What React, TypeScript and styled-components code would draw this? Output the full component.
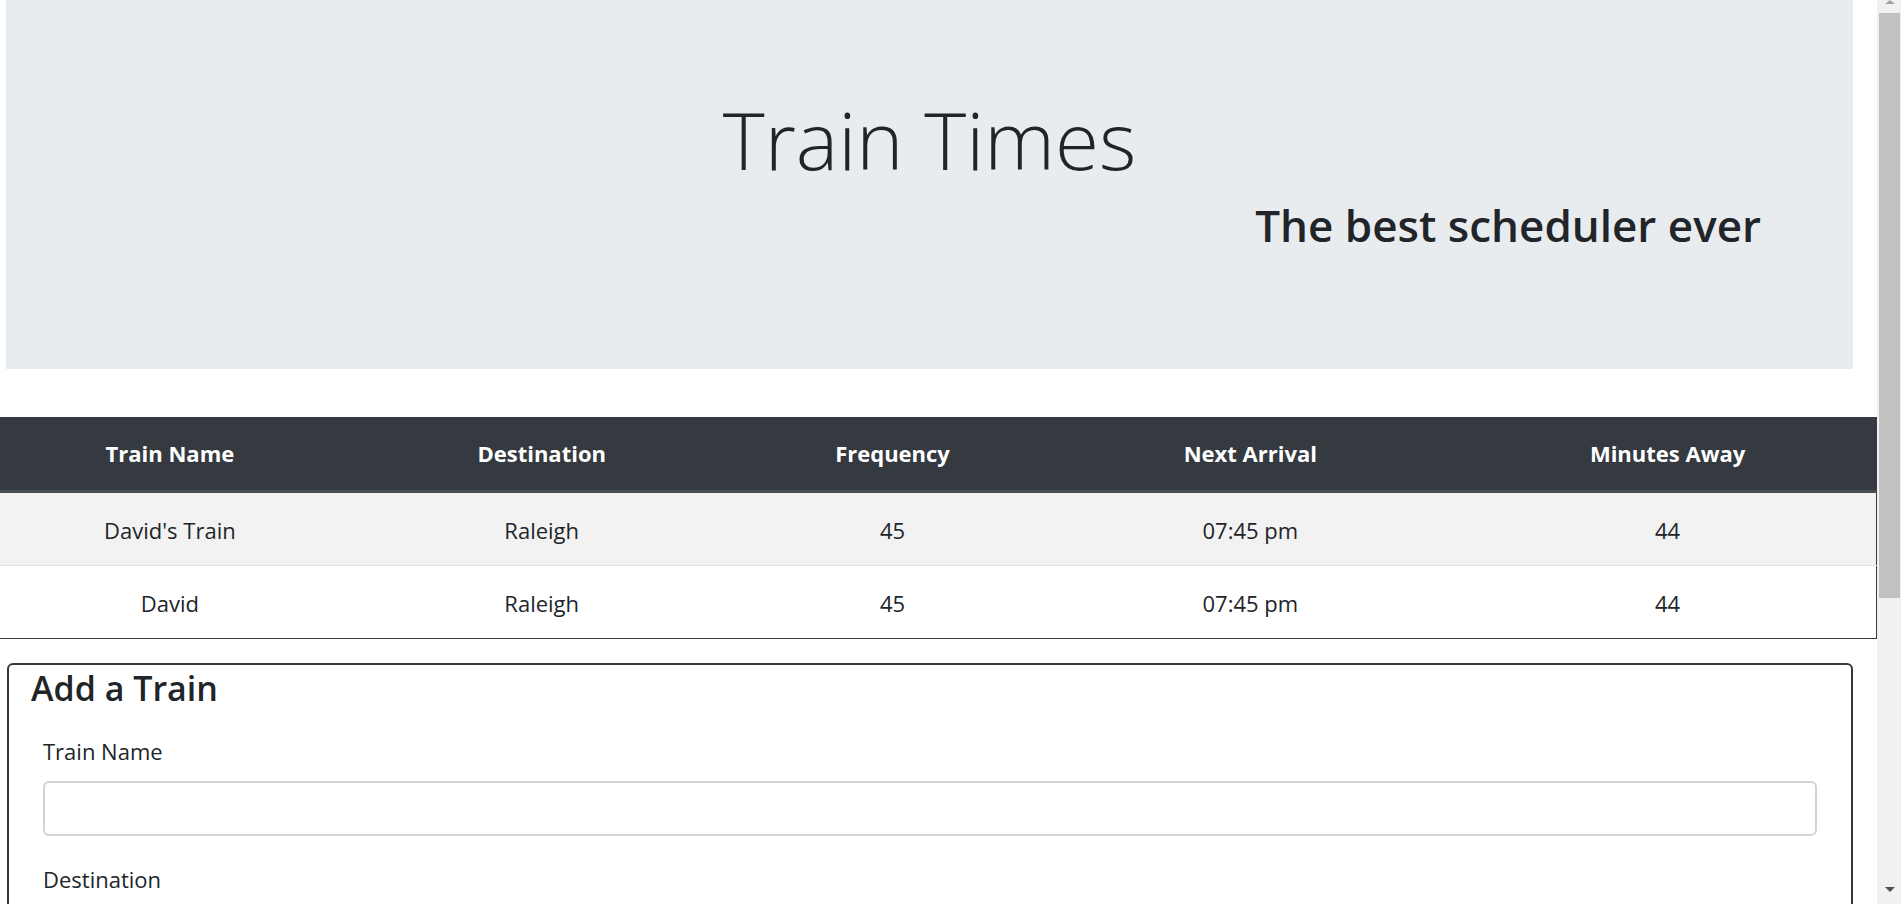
import styled, { createGlobalStyle } from 'styled-components'

const GlobalStyle = createGlobalStyle`
  html, body {
    margin: 0;
    padding: 0;
    height: 100%;
    overflow: hidden;
  }
  body {
    font-family: "Open Sans", "Noto Sans", sans-serif;
    color: #212529;
    background: #fff;
  }
  #root {
    height: 100%;
  }
`

const Shell = styled.div`
  display: flex;
  height: 100vh;
`

const Viewport = styled.main`
  flex: 1;
  min-width: 0;
  overflow: hidden;
`

// window scrollbar on the right edge, page scrolled to the top
const ScrollBar = styled.div`
  width: 24px;
  flex: none;
  display: flex;
  flex-direction: column;
  background: #f1f1f1;
`

const ScrollArrow = styled.div<{ $down?: boolean }>`
  height: ${p => (p.$down ? '17px' : '13px')};
  display: flex;
  justify-content: center;
  padding-left: 1px;

  &::before {
    content: '';
    width: 0;
    height: 0;
    border-left: 5px solid transparent;
    border-right: 5px solid transparent;
    ${p =>
      p.$down
        ? 'border-top: 5px solid #505050;'
        : 'border-bottom: 4px solid #a3a3a3;'}
  }
`

const ScrollThumb = styled.div`
  height: 585px;
  margin: 0 1px 0 2px;
  background: #c1c1c1;
`

const ScrollSpace = styled.div`
  flex: 1;
`

const Jumbotron = styled.header`
  box-sizing: border-box;
  height: 369px;
  margin: 0 24px 0 6px;
  padding: 99px 92px 0;
  background: #e9ecef;
  display: flex;
  flex-direction: column;
`

const Title = styled.h1`
  margin: 0;
  font-size: 80px;
  font-weight: 300;
  line-height: 1;
  text-align: center;
`

const Tagline = styled.h2`
  margin: 24px 0 0;
  font-size: 44px;
  font-weight: 600;
  line-height: 1;
  text-align: right;
`

const Schedule = styled.table`
  width: 100%;
  margin-top: 48px;
  border-collapse: collapse;
  border-right: 1px solid #343a40;
  font-size: 22px;
`

const HeadCell = styled.th<{ $w: number }>`
  width: ${p => p.$w}px;
  padding: 0;
  line-height: 73px;
  background: #343a40;
  color: #fff;
  font-weight: 700;
  text-align: center;
  border-bottom: 3px solid #454d55;
`

const Row = styled.tr<{ $striped?: boolean }>`
  background: ${p => (p.$striped ? '#f2f2f2' : '#fff')};

  &:last-child td {
    border-bottom-color: #343a40;
  }
`

const Cell = styled.td`
  padding: 2px 0 0;
  line-height: 70px;
  text-align: center;
  border-bottom: 1px solid #dee2e6;
`

const Card = styled.section`
  margin: 24px 24px 24px 7px;
  padding: 6px 22px 22px;
  border: 2px solid #343a40;
  border-radius: 6px;
`

const CardTitle = styled.h4`
  margin: 0;
  font-size: 34px;
  font-weight: 600;
  line-height: 1;
`

const Form = styled.form`
  margin-top: 35px;
  padding: 0 12px;
`

const FormGroup = styled.div`
  margin-bottom: 32px;
`

const Label = styled.label`
  display: block;
  margin-bottom: 19px;
  font-size: 22px;
  line-height: 22px;
  color: #212529;
`

const Input = styled.input`
  display: block;
  box-sizing: border-box;
  width: 100%;
  height: 55px;
  padding: 0 18px;
  border: 2px solid #ced4da;
  border-radius: 6px;
  font-family: inherit;
  font-size: 22px;
  color: #495057;
  background: #fff;
  outline: none;
`

const columns = [
  { label: 'Train Name', w: 340 },
  { label: 'Destination', w: 404 },
  { label: 'Frequency', w: 298 },
  { label: 'Next Arrival', w: 418 },
  { label: 'Minutes Away', w: 417 },
]

const trains = [
  { name: "David's Train", destination: 'Raleigh', frequency: 45, next: '07:45 pm', away: 44 },
  { name: 'David', destination: 'Raleigh', frequency: 45, next: '07:45 pm', away: 44 },
]

const fields = [
  { id: 'train-name', label: 'Train Name' },
  { id: 'destination', label: 'Destination' },
]

function App() {
  return (
    <>
      <GlobalStyle />
      <Shell>
        <Viewport>
          <Jumbotron>
            <Title>Train Times</Title>
            <Tagline>The best scheduler ever</Tagline>
          </Jumbotron>

          <Schedule>
            <thead>
              <tr>
                {columns.map(c => (
                  <HeadCell key={c.label} $w={c.w}>{c.label}</HeadCell>
                ))}
              </tr>
            </thead>
            <tbody>
              {trains.map((t, i) => (
                <Row key={i} $striped={i % 2 === 0}>
                  <Cell>{t.name}</Cell>
                  <Cell>{t.destination}</Cell>
                  <Cell>{t.frequency}</Cell>
                  <Cell>{t.next}</Cell>
                  <Cell>{t.away}</Cell>
                </Row>
              ))}
            </tbody>
          </Schedule>

          <Card>
            <CardTitle>Add a Train</CardTitle>
            <Form onSubmit={e => e.preventDefault()}>
              {fields.map(f => (
                <FormGroup key={f.id}>
                  <Label htmlFor={f.id}>{f.label}</Label>
                  <Input id={f.id} type="text" />
                </FormGroup>
              ))}
            </Form>
          </Card>
        </Viewport>

        <ScrollBar aria-hidden="true">
          <ScrollArrow />
          <ScrollThumb />
          <ScrollSpace />
          <ScrollArrow $down />
        </ScrollBar>
      </Shell>
    </>
  )
}

export default App
